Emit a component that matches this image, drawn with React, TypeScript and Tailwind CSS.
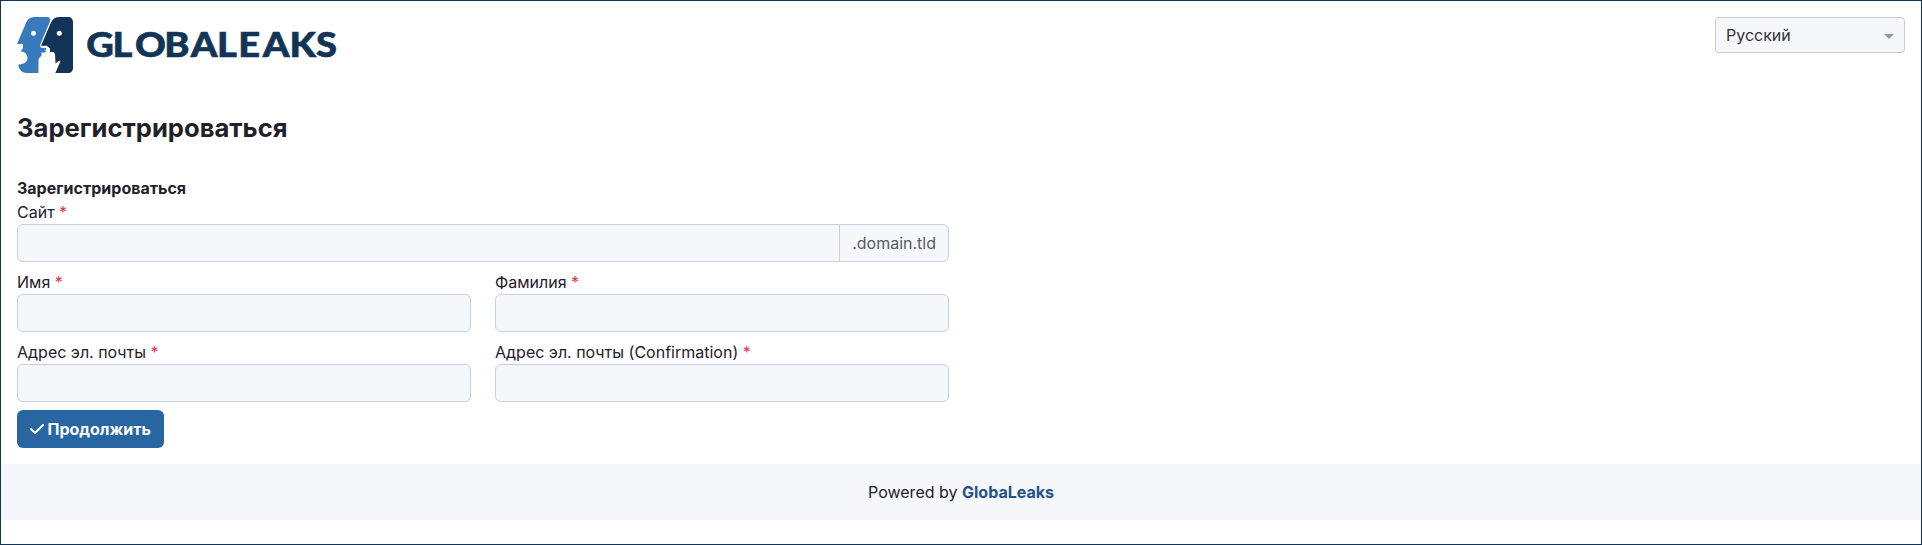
import React from "react";

const LOGO_LETTERS = "GLOBALEAKS";

function Logo() {
  return (
    <svg width="330" height="56" viewBox="0 0 330 56" role="img" aria-label="GLOBALEAKS" className="block">
      <path
        fill="#377bbc"
        d="M18 0H29.500C32.500 0 34 2 32.800 4.800L23.300 27.500C22.700 29.500 23.600 30.800 25.500 31H29V32.500L27.500 33.200L29.500 34L27.500 35.500H24.500V38.500L21.500 42V56H10C5 56 2 52.500 1.300 47.500H2.500C7 47 10.500 44.500 10.500 41C10.500 37 7.500 34.500 3.500 34.500L6 31V27H0L9 6C10.800 2 13.500 0 18 0Z"
      />
      <path
        fill="#123456"
        d="M43 0H51C54 0 56 2 56 5V51C56 54 54 56 51 56H38.300L43.300 44.800V43.800L41.500 44L38.500 46.500L38 37L36.500 35H33V31.500L30 28.700H24L34 5.500C35.800 1.800 38.500 0 43 0Z"
      />
      <circle cx="16.500" cy="16.300" r="2.500" fill="#fff" />
      <circle cx="42.300" cy="16.300" r="2.500" fill="#fff" />
      <text
        y="40"
        x="61.9 85.2 105.3 131.4 155.1 178.6 197.6 219.4 243.2 267"
        transform="scale(1.12 1)"
        fill="#123456"
        stroke="#123456"
        strokeWidth="0.6"
        className="font-[Lato] text-[34px] font-black"
      >
        {LOGO_LETTERS}
      </text>
    </svg>
  );
}

function Label({ children }: { children: React.ReactNode }) {
  return (
    <label className="block h-6 leading-6">
      {children} <span className="text-[#dc3545]">*</span>
    </label>
  );
}

function Field({ label }: { label: string }) {
  return (
    <div className="flex-1">
      <Label>{label}</Label>
      <input
        aria-label={label}
        className="block h-[38px] w-full rounded-md border border-[#c6d0e1] bg-[#f5f7fb] px-3 outline-none"
      />
    </div>
  );
}

export default function App() {
  return (
    <div className="h-[545px] border border-[#123456] bg-white font-[Inter,sans-serif] text-base leading-6 text-[#1f212b]">
      <header className="flex h-[72px] items-start justify-between px-4 pt-4">
        <Logo />
        <button className="flex h-9 w-[190px] items-center justify-between rounded border border-[#ccc] bg-[#f5f7fb] px-[10px] text-[#333]">
          <span>Русский</span>
          <span className="mt-[2px] border-x-5 border-t-5 border-x-transparent border-t-[#999]" />
        </button>
      </header>

      <main className="px-4">
        <h1 className="pt-[39px] text-[25.6px] leading-[31px] font-bold">Зарегистрироваться</h1>
        <form className="w-[932px] pt-[33px]">
          <div className="font-bold">Зарегистрироваться</div>
          <Label>Сайт</Label>
          <div className="flex h-[38px] overflow-hidden rounded-md border border-[#c6d0e1] bg-[#f5f7fb]">
            <input aria-label="Сайт" className="min-w-0 flex-1 px-3 outline-none" />
            <span className="flex items-center border-l border-[#c6d0e1] px-3 text-[#555b62]">.domain.tld</span>
          </div>
          <div className="mt-2 flex gap-6">
            <Field label="Имя" />
            <Field label="Фамилия" />
          </div>
          <div className="mt-2 flex gap-6">
            <Field label="Адрес эл. почты" />
            <Field label="Адрес эл. почты (Confirmation)" />
          </div>
          <button
            type="button"
            className="mt-2 flex h-[38px] w-[147px] items-center rounded-md bg-[#2866a2] pl-[13px] font-bold text-white"
          >
            <svg width="14" height="16" viewBox="0 0 448 512" fill="currentColor" className="mr-[3.5px]">
              <path d="M438.600 105.400c12.500 12.500 12.500 32.800 0 45.300l-256 256c-12.500 12.500-32.800 12.500-45.300 0l-128-128c-12.500-12.500-12.500-32.800 0-45.300s32.800-12.500 45.300 0L160 338.700 393.400 105.400c12.500-12.500 32.800-12.500 45.300 0z" />
            </svg>
            Продолжить
          </button>
        </form>
      </main>

      <footer className="mt-4 flex h-14 items-center justify-center bg-[#f5f7fb]">
        <p>
          Powered by <a className="font-bold text-[#1f5389]">GlobaLeaks</a>
        </p>
      </footer>
    </div>
  );
}
